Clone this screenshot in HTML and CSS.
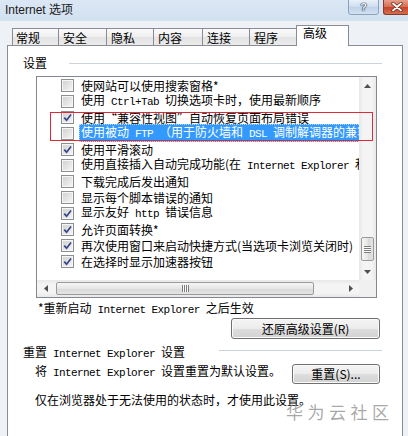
FILE: index.html
```html
<!DOCTYPE html>
<html lang="zh-CN">
<head>
<meta charset="utf-8">
<title>Internet 选项</title>
<link rel="stylesheet" href="styles.css">
</head>
<body>
<div class="window">
  <div class="titlebar">
    <span class="title">Internet 选项</span>
    <div class="caption-btns">
      <span class="cbtn help">?</span>
      <span class="cbtn close"><svg width="12" height="10" viewBox="0 0 12 10"><path d="M2 1.5 L10 8.5 M10 1.5 L2 8.5" stroke="#6b2a1e" stroke-width="3.4" stroke-linecap="round"/><path d="M2 1.5 L10 8.5 M10 1.5 L2 8.5" stroke="#ffffff" stroke-width="1.8" stroke-linecap="round"/></svg></span>
    </div>
  </div>
  <div class="tabs">
    <span class="tab t1">常规</span>
    <span class="tab t2">安全</span>
    <span class="tab t3">隐私</span>
    <span class="tab t4">内容</span>
    <span class="tab t5">连接</span>
    <span class="tab t6">程序</span>
    <span class="tab active">高级</span>
  </div>
  <div class="panel">
    <div class="group-head"><span class="head-label">设置</span><span class="rule rule-a"></span></div>
    <div class="listbox">
      <div class="list">
        <div class="item"><span class="cb"></span><span class="lbl">使网站可以使用搜索窗格*</span></div>
        <div class="item"><span class="cb"></span><span class="lbl">使用<span class="m"> Ctrl+Tab </span>切换选项卡时，使用最新顺序</span></div>
        <div class="item"><span class="cb"><svg class="ck" viewBox="0 0 11 11"><path d="M2.2 5.6 L4.6 8.2 L9 2.4" /></svg></span><span class="lbl">使用“兼容性视图”自动恢复页面布局错误</span></div>
        <div class="item"><span class="cb"></span><span class="lbl sel">使用被动<span class="m"> FTP </span>（用于防火墙和<span class="m"> DSL </span>调制解调器的兼容性）</span></div>
        <div class="item"><span class="cb"><svg class="ck" viewBox="0 0 11 11"><path d="M2.2 5.6 L4.6 8.2 L9 2.4" /></svg></span><span class="lbl">使用平滑滚动</span></div>
        <div class="item"><span class="cb"></span><span class="lbl">使用直接插入自动完成功能(在<span class="m"> Internet Explorer </span>和<span class="m"> Windows </span>资源管理器中)</span></div>
        <div class="item"><span class="cb"></span><span class="lbl">下载完成后发出通知</span></div>
        <div class="item"><span class="cb"></span><span class="lbl">显示每个脚本错误的通知</span></div>
        <div class="item"><span class="cb"><svg class="ck" viewBox="0 0 11 11"><path d="M2.2 5.6 L4.6 8.2 L9 2.4" /></svg></span><span class="lbl">显示友好<span class="m"> http </span>错误信息</span></div>
        <div class="item"><span class="cb"><svg class="ck" viewBox="0 0 11 11"><path d="M2.2 5.6 L4.6 8.2 L9 2.4" /></svg></span><span class="lbl">允许页面转换*</span></div>
        <div class="item"><span class="cb"><svg class="ck" viewBox="0 0 11 11"><path d="M2.2 5.6 L4.6 8.2 L9 2.4" /></svg></span><span class="lbl">再次使用窗口来启动快捷方式(当选项卡浏览关闭时)</span></div>
        <div class="item"><span class="cb"><svg class="ck" viewBox="0 0 11 11"><path d="M2.2 5.6 L4.6 8.2 L9 2.4" /></svg></span><span class="lbl">在选择时显示加速器按钮</span></div>
      </div>
      <div class="vscroll">
        <span class="sbtn"><svg width="7" height="4" viewBox="0 0 7 4"><path d="M0 4 L3.5 0 L7 4 Z" fill="#505050"/></svg></span>
        <span class="vspace"></span>
        <span class="vthumb"><span class="grip-h"></span></span>
        <span class="sbtn"><svg width="7" height="4" viewBox="0 0 7 4"><path d="M0 0 L3.5 4 L7 0 Z" fill="#505050"/></svg></span>
      </div>
      <div class="hscroll">
        <span class="sbtn"><svg width="4" height="7" viewBox="0 0 4 7"><path d="M4 0 L0 3.5 L4 7 Z" fill="#505050"/></svg></span>
        <span class="hthumb"><span class="grip-v"></span></span>
        <span class="hspace"></span>
        <span class="sbtn"><svg width="4" height="7" viewBox="0 0 4 7"><path d="M0 0 L4 3.5 L0 7 Z" fill="#505050"/></svg></span>
      </div>
      <div class="corner"></div>
      <div class="annot"></div>
    </div>
    <div class="note">*重新启动<span class="m"> Internet Explorer </span>之后生效</div>
    <div class="restore-row"><span class="btn btn-restore">还原高级设置(R)</span></div>
    <div class="group-head reset-head"><span class="head-label">重置<span class="m"> Internet Explorer </span>设置</span><span class="rule rule-b"></span></div>
    <div class="reset-row">
      <span class="reset-text">将<span class="m"> Internet Explorer </span>设置重置为默认设置。</span>
      <span class="btn btn-reset">重置(S)...</span>
    </div>
    <div class="only-row">仅在浏览器处于无法使用的状态时，才使用此设置。</div>
  </div>
  <div class="watermark">华为云社区</div>
</div>
</body>
</html>
```
FILE: styles.css
```css
* { box-sizing: border-box; }
html, body { margin: 0; padding: 0; }
body {
  width: 408px;
  height: 436px;
  overflow: hidden;
  background: #eef1f5;
  font-family: "Noto Sans CJK SC", sans-serif;
  font-size: 12px;
  color: #000;
}
.window { position: relative; width: 408px; height: 436px; }

.titlebar {
  height: 21px;
  display: flex;
  align-items: flex-start;
  background: linear-gradient(#dbe7f4, #d2e0f0);
}
.title {
  padding-left: 5px;
  line-height: 20px;
  font-family: "Liberation Sans", "Noto Sans CJK SC", sans-serif;
  font-size: 12px;
  color: #1a1a1a;
}
.caption-btns { margin-left: auto; display: flex; gap: 4px; margin-right: -1px; }
.cbtn {
  height: 16px;
  margin-top: -1px;
  border-radius: 0 0 3px 3px;
  display: flex;
  align-items: center;
  justify-content: center;
}
.help {
  width: 31px;
  border: 1px solid #8ea2bd;
  background: linear-gradient(#eaf1f9, #cddcee 50%, #bfd1e8 51%, #d3e1f1);
  font-family: "Liberation Sans", sans-serif;
  font-weight: bold;
  font-size: 11px;
  color: #e8eef6;
  text-shadow: 0 0 1px #2c3f5c, 0 0 1px #2c3f5c, 0 0 1px #2c3f5c;
}
.close {
  width: 26px;
  border: 1px solid #8a3a2a;
  border-right: 0;
  background: linear-gradient(#e6a08c, #d46d52 50%, #c4432a 51%, #d76d4d);
}

.tabs {
  margin-top: 4px;
  height: 21px;
  display: flex;
  align-items: flex-end;
  padding-left: 12px;
  position: relative;
  z-index: 1;
}
.tab {
  height: 17px;
  margin-bottom: 1px;
  margin-right: -1px;
  padding: 1px 0 0 3px;
  line-height: 16px;
  border: 1px solid #898c95;
  border-bottom: 0;
  background: linear-gradient(#fbfbfb, #efefef 50%, #e3e3e3 51%, #ebebeb);
  white-space: nowrap;
}
.t1 { width: 47px; }
.t2 { width: 49px; padding-left: 4px; }
.t3 { width: 48px; padding-left: 4px; }
.t4 { width: 50px; padding-left: 4px; }
.t5 { width: 48px; padding-left: 4px; }
.t6 { width: 48px; padding-left: 4px; }
.tab.active {
  width: 53px;
  height: 21px;
  margin-bottom: 0;
  padding: 0 0 0 6px;
  line-height: 14px;
  background: #fff;
}

.panel {
  margin-top: -1px;
  margin-left: 7px;
  width: 396px;
  height: 400px;
  border: 1px solid #898c95;
  background: #fff;
  padding-top: 9px;
}

.group-head {
  height: 16px;
  display: flex;
  align-items: center;
  padding-left: 15px;
  padding-right: 20px;
}
.head-label { line-height: 16px; white-space: nowrap; }
.rule { height: 1px; background: #cdd3da; margin-left: auto; }
.rule-a { width: 313px; }
.rule-b { width: 163px; margin-top: -5px; }

.listbox {
  position: relative;
  overflow: hidden;
  margin: 5px 0 0 28px;
  width: 341px;
  height: 222px;
  border: 1px solid #828790;
  display: grid;
  grid-template-columns: minmax(0, 1fr) 17px;
  grid-template-rows: minmax(0, 1fr) 17px;
}
.list { overflow: hidden; min-width: 0; min-height: 0; }
.item {
  height: 16px;
  display: flex;
  align-items: center;
  padding-left: 24px;
  white-space: nowrap;
}
.cb {
  flex: none;
  width: 13px;
  height: 13px;
  margin-right: 5px;
  border: 1px solid #8e8f8f;
  box-shadow: inset 0 0 0 1px #f6f6f6;
  background: linear-gradient(135deg, #cfcfcf, #f7f7f7);
  display: flex;
  align-items: center;
  justify-content: center;
}
.ck { width: 11px; height: 11px; }
.ck path { fill: none; stroke: #34478a; stroke-width: 1.7; }
.lbl { flex: none; line-height: 15px; padding: 0 2px; }
.lbl.sel {
  background: #3399ff;
  color: #fff;
  outline: 1px dotted #b5d8ff;
  outline-offset: -1px;
}
.m {
  font-family: "Liberation Mono", monospace;
  font-size: 11px;
  letter-spacing: -0.6px;
}

.vscroll {
  display: flex;
  flex-direction: column;
  background: linear-gradient(90deg, #e8e8e8, #f4f4f4 25%, #f4f4f4 75%, #e8e8e8);
  position: relative;
  z-index: 1;
}
.hscroll {
  display: flex;
  background: linear-gradient(#e8e8e8, #f4f4f4 25%, #f4f4f4 75%, #e8e8e8);
}
.corner { background: #f0f0f0; }
.sbtn {
  flex: none;
  width: 17px;
  height: 17px;
  display: flex;
  align-items: center;
  justify-content: center;
}
.vspace, .hspace { flex: 1; }
.vthumb {
  height: 24px;
  margin: 0 2px 2px;
  border: 1px solid #9a9a9a;
  border-radius: 2px;
  background: linear-gradient(90deg, #f6f6f6, #e6e6e6 50%, #d9d9d9 51%, #e4e4e4);
  display: flex;
  align-items: center;
  justify-content: center;
}
.grip-h {
  width: 7px;
  height: 7px;
  background: repeating-linear-gradient(#7d7d7d 0 1px, #fafafa 1px 2px);
}
.hthumb {
  width: 258px;
  margin: 2px 0 2px 2px;
  border: 1px solid #9a9a9a;
  border-radius: 2px;
  background: linear-gradient(#f6f6f6, #e6e6e6 50%, #d9d9d9 51%, #e4e4e4);
  display: flex;
  align-items: center;
  justify-content: center;
}
.grip-v {
  width: 7px;
  height: 7px;
  background: repeating-linear-gradient(90deg, #7d7d7d 0 1px, #fafafa 1px 2px);
}
.annot {
  position: absolute;
  left: 13px;
  top: 35px;
  width: 323px;
  height: 29px;
  border: 1px solid #de2a37;
  z-index: 2;
}

.note {
  margin-top: 2px;
  height: 16px;
  line-height: 16px;
  padding-left: 30px;
  white-space: nowrap;
}
.restore-row {
  display: flex;
  justify-content: flex-end;
  padding-right: 22px;
  margin-top: 2px;
}
.btn {
  height: 21px;
  border: 1px solid #707070;
  border-radius: 3px;
  background: linear-gradient(#f4f4f4, #ececec 50%, #dedede 51%, #d2d2d2);
  box-shadow: inset 0 0 0 1px #fbfbfb;
  display: flex;
  align-items: center;
  justify-content: center;
  line-height: 16px;
  white-space: nowrap;
}
.btn-restore { width: 149px; }
.reset-head { margin-top: 6px; }
.reset-row {
  display: flex;
  align-items: flex-start;
  padding-left: 27px;
  padding-right: 22px;
  margin-top: 2px;
}
.reset-text { line-height: 16px; white-space: nowrap; }
.btn-reset { width: 88px; height: 20px; margin-left: auto; margin-top: 1px; }
.only-row {
  margin-top: 8px;
  padding-left: 27px;
  line-height: 16px;
  white-space: nowrap;
}

.watermark {
  position: absolute;
  left: 286px;
  top: 400px;
  font-size: 17px;
  letter-spacing: 4.5px;
  color: rgba(140, 140, 140, 0.75);
  line-height: 24px;
  white-space: nowrap;
}
```
